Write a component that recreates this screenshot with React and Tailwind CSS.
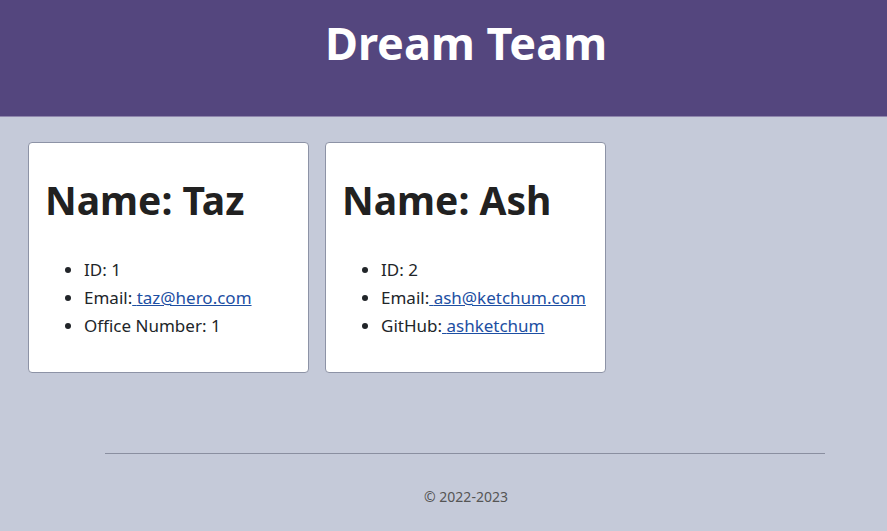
export default function App() {
  const team = [
    {
      name: 'Taz',
      id: 1,
      email: 'taz@hero.com',
      extra: { label: 'Office Number', value: '1' },
    },
    {
      name: 'Ash',
      id: 2,
      email: 'ash@ketchum.com',
      extra: { label: 'GitHub', value: 'ashketchum', link: 'https://github.com/ashketchum' },
    },
  ];

  return (
    <div
      className="min-h-[531px] bg-[#c5cad9] text-[#212529]"
      style={{ fontFamily: '"Noto Sans", "Open Sans", sans-serif' }}
    >
      <header className="h-[117px] bg-[#54467e] border-b border-[#8f86ad] pl-[45px] text-center">
        <h1 className="pt-[11px] text-[45px] font-bold leading-[64px] text-white">Dream Team</h1>
      </header>

      <main className="flex gap-4 px-7 pt-[25px]">
        {team.map((m) => (
          <div
            key={m.id}
            className="w-[281px] h-[231px] bg-white border border-[#8d93a6] rounded-[4px] px-4 pt-[33px]"
          >
            <h2 className="text-[39px] font-bold leading-[48px] text-[#212121]">Name: {m.name}</h2>
            <ul className="list-disc pl-[23px] mt-[32px] text-[17px] leading-[28px] whitespace-nowrap">
              <li className="ml-[16px]">ID: {m.id}</li>
              <li className="ml-[16px]">
                Email:
                <a href={`mailto:${m.email}`} className="text-[#1d4fa3] underline">
                  {' '}
                  {m.email}
                </a>
              </li>
              <li className="ml-[16px]">
                {m.extra.label}:
                {m.extra.link ? (
                  <a href={m.extra.link} className="text-[#1d4fa3] underline">
                    {' '}
                    {m.extra.value}
                  </a>
                ) : (
                  <span> {m.extra.value}</span>
                )}
              </li>
            </ul>
          </div>
        ))}
      </main>

      <footer className="mt-[80px] pb-6">
        <hr className="ml-[105px] w-[720px] border-0 border-t border-[#8a8fa0]" />
        <p className="mt-[32px] pl-[45px] text-center text-[14px] text-[#555]">© 2022-2023</p>
      </footer>
    </div>
  );
}
